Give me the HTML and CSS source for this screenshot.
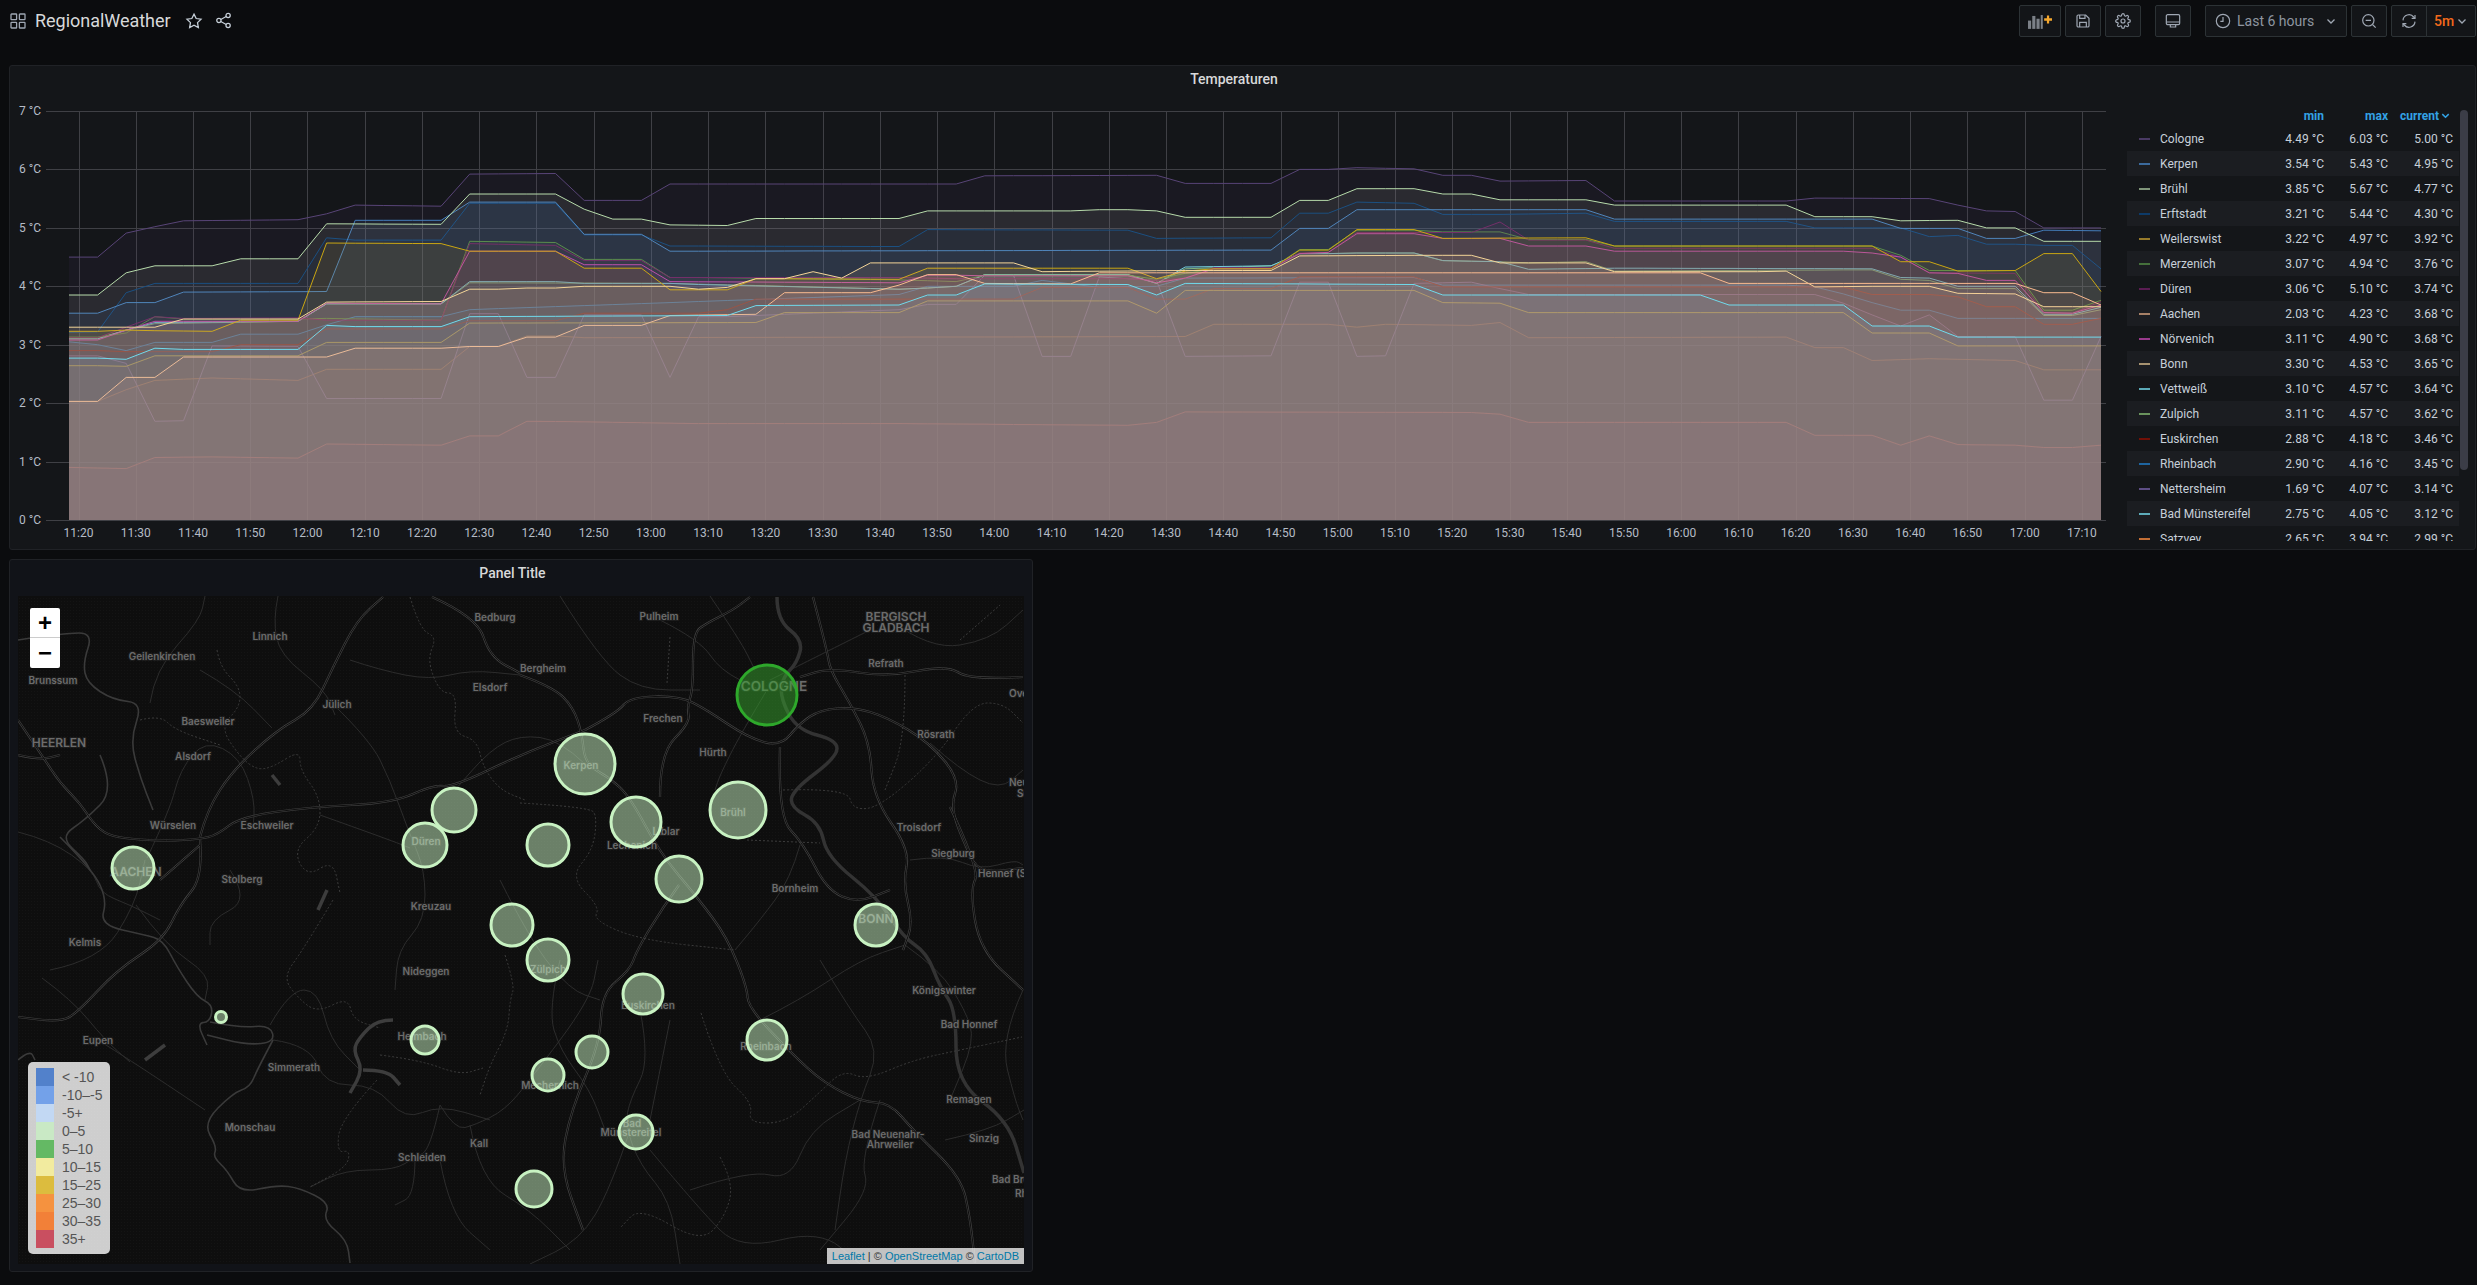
FILE: index.html
```html
<!DOCTYPE html>
<html lang="en">
<head>
<meta charset="utf-8">
<title>RegionalWeather</title>
<link rel="stylesheet" href="styles.css">
</head>
<body>
<header class="nav">
  <div class="nav-left">
    <svg class="ico ico-apps" viewBox="0 0 16 16"><rect x="1" y="1" width="5.6" height="5.6" rx=".6"/><rect x="9.4" y="1" width="5.6" height="5.6" rx=".6"/><rect x="1" y="9.4" width="5.6" height="5.6" rx=".6"/><rect x="9.4" y="9.4" width="5.6" height="5.6" rx=".6"/></svg>
    <h1 class="dash-title">RegionalWeather</h1>
    <svg class="ico ico-star" viewBox="0 0 24 24"><polygon points="12,2.8 14.9,8.7 21.4,9.6 16.7,14.2 17.8,20.7 12,17.6 6.2,20.7 7.3,14.2 2.6,9.6 9.1,8.7"/></svg>
    <svg class="ico ico-share" viewBox="0 0 24 24"><circle cx="18.5" cy="5" r="3"/><circle cx="5.5" cy="12" r="3"/><circle cx="18.5" cy="19" r="3"/><path d="M8.2 10.6l7.6-4.2M8.2 13.4l7.6 4.2"/></svg>
  </div>
  <div class="nav-right">
    <button class="btn btn-add"><svg class="ico-add" viewBox="0 0 26 16"><rect x="0" y="7" width="3.4" height="9"/><rect x="4.6" y="2" width="3.4" height="14"/><rect x="9.2" y="5" width="3.4" height="11"/><rect x="13.8" y="1" width="2.2" height="15"/><path class="plus" d="M17.5 4.5h3v-3h2.4v3H26v2.6h-3.1v3h-2.4v-3h-3z"/></svg></button>
    <button class="btn"><svg class="ico ico-btn" viewBox="0 0 24 24"><path d="M5 3h11l5 5v11a2 2 0 0 1-2 2H5a2 2 0 0 1-2-2V5a2 2 0 0 1 2-2z"/><path d="M7 21v-7h10v7M7 3v5h8V3"/></svg></button>
    <button class="btn"><svg class="ico ico-btn" viewBox="0 0 24 24"><circle cx="12" cy="12" r="3"/><path d="M19.4 15a1.65 1.65 0 0 0 .33 1.82l.06.06a2 2 0 0 1 0 2.83 2 2 0 0 1-2.83 0l-.06-.06a1.65 1.65 0 0 0-1.82-.33 1.65 1.65 0 0 0-1 1.51V21a2 2 0 0 1-2 2 2 2 0 0 1-2-2v-.09A1.65 1.65 0 0 0 9 19.4a1.65 1.65 0 0 0-1.82.33l-.06.06a2 2 0 0 1-2.83 0 2 2 0 0 1 0-2.83l.06-.06a1.65 1.65 0 0 0 .33-1.82 1.65 1.65 0 0 0-1.51-1H3a2 2 0 0 1-2-2 2 2 0 0 1 2-2h.09A1.65 1.65 0 0 0 4.6 9a1.65 1.65 0 0 0-.33-1.82l-.06-.06a2 2 0 0 1 0-2.83 2 2 0 0 1 2.83 0l.06.06a1.65 1.65 0 0 0 1.82.33H9a1.65 1.65 0 0 0 1-1.51V3a2 2 0 0 1 2-2 2 2 0 0 1 2 2v.09a1.65 1.65 0 0 0 1 1.51 1.65 1.65 0 0 0 1.82-.33l.06-.06a2 2 0 0 1 2.83 0 2 2 0 0 1 0 2.83l-.06.06a1.65 1.65 0 0 0-.33 1.82V9a1.65 1.65 0 0 0 1.51 1H21a2 2 0 0 1 2 2 2 2 0 0 1-2 2h-.09a1.65 1.65 0 0 0-1.51 1z"/></svg></button>
    <button class="btn btn-gap"><svg class="ico ico-btn" viewBox="0 0 24 24"><rect x="2" y="2.5" width="20" height="15" rx="2"/><path d="M2 13.5h20M8 17.5v3.5h8v-3.5"/></svg></button>
    <button class="btn btn-gap btn-time"><svg class="ico ico-btn" viewBox="0 0 24 24"><circle cx="12" cy="12" r="10"/><path d="M12 6v6.5H8"/></svg><span>Last 6 hours</span><svg class="ico ico-chev" viewBox="0 0 12 12"><path d="M2.5 4.5L6 8l3.5-3.5"/></svg></button>
    <button class="btn"><svg class="ico ico-btn" viewBox="0 0 24 24"><circle cx="11" cy="11" r="8.5"/><path d="M7 11h8M17.2 17.2L22 22"/></svg></button>
    <div class="btn-group">
      <button class="btn btn-sync"><svg class="ico ico-btn" viewBox="0 0 24 24"><path d="M3 11a9 9 0 0 1 16-5l2 2M21 13a9 9 0 0 1-16 5l-2-2"/><path d="M21 3v5h-5M3 21v-5h5"/></svg></button>
      <button class="btn btn-rate"><span>5m</span><svg class="ico ico-chev" viewBox="0 0 12 12"><path d="M2.5 4.5L6 8l3.5-3.5"/></svg></button>
    </div>
  </div>
</header>

<main class="dashboard">
  <section class="panel panel-graph">
    <h2 class="panel-title">Temperaturen</h2>
    <div class="graph-body">
      <svg id="chart" class="chart" viewBox="10 102 2110 447">
        <g id="grid"></g>
        <g id="series"></g>
        <g class="ylabels">
          <text x="41" y="115">7 °C</text><text x="41" y="173.4">6 °C</text><text x="41" y="231.8">5 °C</text><text x="41" y="290.3">4 °C</text><text x="41" y="348.7">3 °C</text><text x="41" y="407.1">2 °C</text><text x="41" y="465.6">1 °C</text><text x="41" y="524">0 °C</text>
        </g>
        <g class="xlabels">
          <text x="78.5" y="537">11:20</text><text x="135.7" y="537">11:30</text><text x="193" y="537">11:40</text><text x="250.2" y="537">11:50</text><text x="307.5" y="537">12:00</text><text x="364.7" y="537">12:10</text><text x="421.9" y="537">12:20</text><text x="479.2" y="537">12:30</text><text x="536.4" y="537">12:40</text><text x="593.7" y="537">12:50</text><text x="650.9" y="537">13:00</text><text x="708.1" y="537">13:10</text><text x="765.4" y="537">13:20</text><text x="822.6" y="537">13:30</text><text x="879.9" y="537">13:40</text><text x="937.1" y="537">13:50</text><text x="994.3" y="537">14:00</text><text x="1051.6" y="537">14:10</text><text x="1108.8" y="537">14:20</text><text x="1166.1" y="537">14:30</text><text x="1223.3" y="537">14:40</text><text x="1280.5" y="537">14:50</text><text x="1337.8" y="537">15:00</text><text x="1395" y="537">15:10</text><text x="1452.3" y="537">15:20</text><text x="1509.5" y="537">15:30</text><text x="1566.7" y="537">15:40</text><text x="1624" y="537">15:50</text><text x="1681.2" y="537">16:00</text><text x="1738.5" y="537">16:10</text><text x="1795.7" y="537">16:20</text><text x="1852.9" y="537">16:30</text><text x="1910.2" y="537">16:40</text><text x="1967.4" y="537">16:50</text><text x="2024.7" y="537">17:00</text><text x="2081.9" y="537">17:10</text>
        </g>
      </svg>
      <div class="legend">
        <div class="legend-head"><span></span><span></span><span>min</span><span>max</span><span class="sorted">current<svg class="ico ico-sort" viewBox="0 0 12 12"><path d="M2.5 4.5L6 8l3.5-3.5"/></svg></span></div>
        <div class="legend-row"><i class="sw c-cologne"></i><span>Cologne</span><span>4.49 °C</span><span>6.03 °C</span><span>5.00 °C</span></div>
        <div class="legend-row"><i class="sw c-kerpen"></i><span>Kerpen</span><span>3.54 °C</span><span>5.43 °C</span><span>4.95 °C</span></div>
        <div class="legend-row"><i class="sw c-bruehl"></i><span>Brühl</span><span>3.85 °C</span><span>5.67 °C</span><span>4.77 °C</span></div>
        <div class="legend-row"><i class="sw c-erft"></i><span>Erftstadt</span><span>3.21 °C</span><span>5.44 °C</span><span>4.30 °C</span></div>
        <div class="legend-row"><i class="sw c-weil"></i><span>Weilerswist</span><span>3.22 °C</span><span>4.97 °C</span><span>3.92 °C</span></div>
        <div class="legend-row"><i class="sw c-merz"></i><span>Merzenich</span><span>3.07 °C</span><span>4.94 °C</span><span>3.76 °C</span></div>
        <div class="legend-row"><i class="sw c-dueren"></i><span>Düren</span><span>3.06 °C</span><span>5.10 °C</span><span>3.74 °C</span></div>
        <div class="legend-row"><i class="sw c-aachen"></i><span>Aachen</span><span>2.03 °C</span><span>4.23 °C</span><span>3.68 °C</span></div>
        <div class="legend-row"><i class="sw c-noerv"></i><span>Nörvenich</span><span>3.11 °C</span><span>4.90 °C</span><span>3.68 °C</span></div>
        <div class="legend-row"><i class="sw c-bonn"></i><span>Bonn</span><span>3.30 °C</span><span>4.53 °C</span><span>3.65 °C</span></div>
        <div class="legend-row"><i class="sw c-vett"></i><span>Vettweiß</span><span>3.10 °C</span><span>4.57 °C</span><span>3.64 °C</span></div>
        <div class="legend-row"><i class="sw c-zulp"></i><span>Zulpich</span><span>3.11 °C</span><span>4.57 °C</span><span>3.62 °C</span></div>
        <div class="legend-row"><i class="sw c-eusk"></i><span>Euskirchen</span><span>2.88 °C</span><span>4.18 °C</span><span>3.46 °C</span></div>
        <div class="legend-row"><i class="sw c-rhein"></i><span>Rheinbach</span><span>2.90 °C</span><span>4.16 °C</span><span>3.45 °C</span></div>
        <div class="legend-row"><i class="sw c-nett"></i><span>Nettersheim</span><span>1.69 °C</span><span>4.07 °C</span><span>3.14 °C</span></div>
        <div class="legend-row"><i class="sw c-badm"></i><span>Bad Münstereifel</span><span>2.75 °C</span><span>4.05 °C</span><span>3.12 °C</span></div>
        <div class="legend-row"><i class="sw c-satz"></i><span>Satzvey</span><span>2.65 °C</span><span>3.94 °C</span><span>2.99 °C</span></div>
        <div class="scrollbar"></div>
      </div>
    </div>
  </section>

  <section class="panel panel-map">
    <h2 class="panel-title">Panel Title</h2>
    <div class="map">
      <svg class="map-svg" viewBox="18 596 1006 668">
        <defs>
          <pattern id="dither" width="3" height="3" patternUnits="userSpaceOnUse"><rect x="1" y="1" width="1" height="1" fill="#141414"/></pattern>
          <g id="mw">
            <polyline points="18,720 43,757 60,783 80,803 93,823 107,835 130,839 167,841 200,839 217,835 240,817 310,807 393,803 433,785 453,787 520,755 585,730"/>
            <polyline points="520,675 553,687 573,707 582,733 585,764 610,778 630,797 660,853 697,897 727,937 747,987 748,1007 791,1053 824,1083 862,1102 890,1103 913,1130 961,1177 970,1217 975,1263"/>
            <polyline points="585,730 617,713 630,697 680,696 707,710 747,737 780,747 800,723 820,710 853,707 887,717 930,743 960,780 950,807 967,850 980,873 1023,868"/>
            <polyline points="780,747 778,817 803,843 827,890 857,903 890,890"/>
            <polyline points="660,797 660,753 690,723 687,707 693,690 693,633 707,623 733,610 750,597"/>
            <polyline points="813,597 827,650 830,670 850,703 870,743 873,797 910,850 903,883 913,923 903,950"/>
            <polyline points="1023,677 970,680 947,665 887,677 830,668 800,677"/>
            <polyline points="950,807 980,870 970,890 980,950 1023,990"/>
            <polyline points="679,885 663,907 637,950 630,970 602,993 600,1043 571,1110 560,1167 583,1230"/>
            <polyline points="200,839 203,877 180,905 163,940 117,970 77,1013 60,1022 18,1017"/>
            <polyline points="200,837 207,810 233,770 277,730 313,710 333,667 357,620 383,597"/>
            <polyline points="432,597 477,617 490,657 520,673"/>
            <polyline points="18,755 40,760 60,755"/>
            <polyline points="160,880 175,867 200,845"/>
          </g>
        </defs>
        <rect x="18" y="596" width="1006" height="668" class="land"/>
        <rect x="18" y="596" width="1006" height="668" fill="url(#dither)"/>
        <g class="thin">
          <polyline points="18,832 50,840 93,870 100,893 130,905 160,920"/>
          <polyline points="147,858 170,810 180,770 205,740 240,757 255,800 253,830"/>
          <polyline points="150,703 155,670 200,620 205,596"/>
          <polyline points="278,596 273,620 280,655 325,690 335,715"/>
          <polyline points="200,670 235,690 272,728"/>
          <polyline points="333,704 370,740 390,780 408,830 425,870 425,920 398,950 395,990"/>
          <polyline points="350,660 380,670 430,680 470,670 520,675"/>
          <polyline points="320,815 390,840 410,848"/>
          <polyline points="230,870 250,900 210,920 210,945"/>
          <polyline points="50,970 100,960 135,905 145,860"/>
          <polyline points="42,978 72,1000 105,1040 130,1062"/>
          <polyline points="136,905 165,945 210,975 205,1000"/>
          <polyline points="270,1025 290,990 318,990 330,1040 360,1070"/>
          <polyline points="98,1040 130,1060 205,1110"/>
          <polyline points="273,1040 310,1045 325,1085 375,1085 405,1120 440,1105 490,1120"/>
          <polyline points="440,1105 430,1150 415,1157 395,1170 345,1170 310,1187"/>
          <polyline points="440,1105 455,1130 475,1125 505,1110 530,1080 590,1000 598,960"/>
          <polyline points="470,1125 480,1180 530,1210 570,1250"/>
          <polyline points="415,1157 415,1195 395,1205"/>
          <polyline points="440,1160 450,1215 490,1250"/>
          <polyline points="640,1010 650,1060 630,1100 625,1125 640,1165 670,1200 680,1264"/>
          <polyline points="630,1130 610,1190 580,1240 530,1264"/>
          <polyline points="500,880 530,940 570,990 600,1000"/>
          <polyline points="560,960 548,1010 560,1050 590,1090 605,1130"/>
          <polyline points="585,764 560,740 520,735 490,750 455,790"/>
          <polyline points="660,620 700,640 720,670 760,690"/>
          <polyline points="767,690 740,735 720,775 715,790"/>
          <polyline points="560,596 600,660 640,690 700,690"/>
          <polyline points="710,596 740,640 755,670"/>
          <polyline points="890,620 930,650 990,640 1023,610"/>
          <polyline points="870,630 790,670 770,680"/>
          <polyline points="910,860 945,855 980,870 1015,860 1023,865"/>
          <polyline points="930,743 960,770 1000,790 1023,770"/>
          <polyline points="800,845 790,880 760,920 735,950"/>
          <polyline points="820,960 850,1010 880,1050 860,1100 845,1160 835,1230"/>
          <polyline points="760,1020 800,1000 860,960 905,945"/>
          <polyline points="905,945 940,970 965,1010 975,1040 950,1100"/>
          <polyline points="1023,990 1000,1040 1015,1100 1023,1120"/>
          <polyline points="670,1020 662,1060 650,1120"/>
          <polyline points="690,1190 750,1170 790,1180 810,1130 860,1100"/>
          <polyline points="650,1150 700,1210 740,1250 820,1230 860,1264"/>
          <polyline points="880,1100 860,1160 870,1190 820,1250"/>
          <polyline points="945,1140 990,1130 1024,1110"/>
        </g>
        <g class="border-line">
          <polyline points="18,640 65,633 93,633 83,663 87,683 113,700 143,703 130,740 140,777 153,810"/>
          <polyline points="60,837 93,870 107,900 100,925 145,935 163,940 177,967 197,997 213,1005 210,1022 197,1023 207,1045"/>
          <polyline points="210,1022 240,1028 270,1025 275,1042 247,1045 207,1035"/>
          <polyline points="273,1040 257,1070 250,1087 233,1093 203,1123 217,1147 213,1157 227,1170 240,1193 277,1185 300,1188 330,1203 323,1220 347,1240 350,1263"/>
          <polyline points="100,755 115,790 85,820 60,837 85,860 90,870"/>
          <polyline points="18,1060 30,1050 35,1060"/>
        </g>
        <g class="river">
          <polyline points="777,597 777,620 803,640 797,663 783,677 780,697 797,730 837,740 837,757 793,790 790,807 820,823 827,857 877,897 903,937 927,953 940,987 956,1010 956,1083 1008,1120 1024,1173"/>
        </g>
        <g class="lake">
          <polyline points="393,1020 377,1020 360,1037 353,1050 363,1070 350,1093"/>
          <polyline points="363,1070 387,1070 400,1085"/>
          <polyline points="327,890 318,910"/>
          <polyline points="145,1060 165,1045"/>
          <polyline points="272,775 280,785"/>
        </g>
        <g class="mw-a"><use href="#mw"/></g>
        <g class="mw-b"><use href="#mw"/></g>
        <g class="dots">
          <polyline points="410,597 420,630 437,637 427,660 440,693 457,693 453,733 477,740 483,767 500,790 525,800"/>
          <polyline points="217,650 220,667 240,687 240,707 220,727 240,757 257,770 273,767 300,750 300,770 320,797 320,827 293,850 307,877 333,860 340,893"/>
          <polyline points="140,720 160,715 175,730 220,745"/>
          <polyline points="333,900 303,950 283,977 297,997 317,1013 348,997 353,1020 380,1028"/>
          <polyline points="377,1080 340,1120 337,1153 350,1150 347,1167 310,1187"/>
          <polyline points="380,1055 420,1060 460,1075 483,1068"/>
          <polyline points="701,1013 720,1073 753,1103 748,1123 786,1123 819,1093 843,1070 866,1080 913,1060 960,1050 1022,1037"/>
          <polyline points="720,1157 734,1183 725,1217 701,1243 640,1207 621,1227"/>
          <polyline points="783,790 847,788 853,810 880,807 937,757 973,703 1003,703 1023,723"/>
          <polyline points="670,637 667,683"/>
          <polyline points="520,803 590,807 597,817 593,850 570,877 600,907 593,920 640,940 735,950"/>
          <polyline points="747,840 820,843"/>
          <polyline points="505,955 515,985 510,1000 508,1030 490,1065 480,1095"/>
          <polyline points="960,640 1000,605"/>
          <polyline points="905,675 905,740 885,790"/>
        </g>
        <g class="map-labels">
          <text x="270" y="640">Linnich</text><text x="162" y="660">Geilenkirchen</text><text x="53" y="684">Brunssum</text><text class="big" x="59" y="747">HEERLEN</text><text x="208" y="725">Baesweiler</text><text x="193" y="760">Alsdorf</text><text x="337" y="708">Jülich</text><text x="495" y="621">Bedburg</text><text x="490" y="691">Elsdorf</text><text x="173" y="829">Würselen</text><text x="267" y="829">Eschweiler</text><text class="big" x="136" y="876">AACHEN</text><text x="242" y="883">Stolberg</text><text x="426" y="845">Düren</text><text x="431" y="910">Kreuzau</text><text x="85" y="946">Kelmis</text>
          <text x="659" y="620">Pulheim</text><text class="big" x="896" y="621">BERGISCH</text><text class="big" x="896" y="632">GLADBACH</text><text x="543" y="672">Bergheim</text><text x="886" y="667">Refrath</text><text class="huge" x="774" y="691">COLOGNE</text><text x="1009" y="697" class="start">Overath</text><text x="663" y="722">Frechen</text><text x="936" y="738">Rösrath</text><text x="713" y="756">Hürth</text><text x="581" y="769">Kerpen</text><text x="733" y="816">Brühl</text><text x="919" y="831">Troisdorf</text><text x="1009" y="786" class="start">Neunkirchen-</text><text x="1017" y="797" class="start">Seelscheid</text><text x="632" y="849">Lechenich</text><text x="666" y="835">Liblar</text><text x="953" y="857">Siegburg</text><text x="978" y="877" class="start">Hennef (Sieg)</text><text x="795" y="892">Bornheim</text><text class="big" x="876" y="923">BONN</text>
          <text x="426" y="975">Nideggen</text><text x="548" y="973">Zülpich</text><text x="944" y="994">Königswinter</text><text x="648" y="1009">Euskirchen</text><text x="969" y="1028">Bad Honnef</text><text x="422" y="1040">Heimbach</text><text x="766" y="1050">Rheinbach</text><text x="550" y="1089">Mechernich</text><text x="479" y="1147">Kall</text><text x="294" y="1071">Simmerath</text><text x="250" y="1131">Monschau</text><text x="98" y="1044">Eupen</text><text x="422" y="1161">Schleiden</text><text x="969" y="1103">Remagen</text><text x="888" y="1138">Bad Neuenahr-</text><text x="890" y="1148">Ahrweiler</text><text x="984" y="1142">Sinzig</text><text x="632" y="1127">Bad</text><text x="631" y="1136">Münstereifel</text><text x="992" y="1183" class="start">Bad Breisig</text><text x="1015" y="1197" class="start">Rheineck</text>
        </g>
        <g class="markers">
          <circle class="mk-hot" cx="767" cy="695" r="30"/>
          <circle cx="585" cy="764" r="30"/><circle cx="738" cy="810" r="28"/><circle cx="636" cy="822" r="25"/><circle cx="679" cy="879" r="23"/><circle cx="548" cy="845" r="21"/><circle cx="454" cy="810" r="22"/><circle cx="425" cy="845" r="22"/><circle cx="133" cy="868" r="21"/><circle cx="876" cy="925" r="21"/><circle cx="512" cy="925" r="21"/><circle cx="548" cy="960" r="21"/><circle cx="643" cy="994" r="20"/><circle cx="767" cy="1040" r="20"/><circle cx="425" cy="1040" r="14"/><circle cx="592" cy="1052" r="16"/><circle cx="548" cy="1075" r="16"/><circle cx="636" cy="1132" r="17"/><circle cx="534" cy="1189" r="18"/><circle cx="221" cy="1017" r="5.5"/>
        </g>
      </svg>
      <div class="zoom-ctl"><a>+</a><a>−</a></div>
      <div class="map-legend">
        <div class="ml-row"><i class="ml-sw s1"></i>&lt; -10</div>
        <div class="ml-row"><i class="ml-sw s2"></i>-10–-5</div>
        <div class="ml-row"><i class="ml-sw s3"></i>-5+</div>
        <div class="ml-row"><i class="ml-sw s4"></i>0–5</div>
        <div class="ml-row"><i class="ml-sw s5"></i>5–10</div>
        <div class="ml-row"><i class="ml-sw s6"></i>10–15</div>
        <div class="ml-row"><i class="ml-sw s7"></i>15–25</div>
        <div class="ml-row"><i class="ml-sw s8"></i>25–30</div>
        <div class="ml-row"><i class="ml-sw s9"></i>30–35</div>
        <div class="ml-row"><i class="ml-sw s10"></i>35+</div>
      </div>
      <div class="attribution"><a>Leaflet</a> | © <a>OpenStreetMap</a> © <a>CartoDB</a></div>
    </div>
  </section>
</main>
<script src="chart.js"></script>
</body>
</html>
```
FILE: styles.css
```css
* { box-sizing: border-box; }
html, body { margin: 0; height: 100%; }
body {
  background: #0b0c0e;
  color: #c7d0d9;
  font-family: Roboto, "Liberation Sans", sans-serif;
  font-size: 12px;
  overflow: hidden;
}
h1, h2 { margin: 0; font-weight: 500; }

.nav { display: flex; justify-content: space-between; height: 65px; padding: 5px 1px 0 10px; }
.nav-left { display: flex; align-items: center; height: 31px; }
.nav-right { display: flex; align-items: flex-start; gap: 4px; }
.ico { fill: none; stroke: #9fa7b3; stroke-width: 1.6; flex: none; }
.ico-apps { width: 16px; height: 16px; stroke-width: 1.3; margin-top: 1px; }
.dash-title { font-size: 18px; font-weight: 400; color: #d8d9da; margin-left: 9px; letter-spacing: -.03px; }
.ico-star { width: 18px; height: 18px; margin-left: 14px; stroke: #c7d0d9; stroke-width: 1.7; }
.ico-share { width: 17px; height: 17px; margin-left: 12px; stroke: #c7d0d9; stroke-width: 1.8; }

.btn {
  display: flex; align-items: center; justify-content: center;
  width: 36px; height: 32px; padding: 0;
  background: #131518; border: 1px solid #2c3235; border-radius: 2px;
  color: #9fa7b3; font: 14px Roboto, sans-serif;
}
.btn-gap { margin-left: 10px; }
.btn-add { width: 42px; }
.ico-add { width: 24px; height: 15px; fill: #7b8087; }
.ico-add .plus { fill: #f5a82e; }
.ico-btn { width: 16px; height: 16px; stroke: #9fa7b3; stroke-width: 1.8; }
.btn-time { width: 142px; justify-content: flex-start; padding-left: 9px; }
.btn-time span { margin-left: 6px; font-size: 14px; color: #8e95a0; }
.ico-chev { width: 12px; height: 12px; stroke-width: 1.3; }
.btn-time .ico-chev { margin-left: 11px; }
.btn-group { display: flex; }
.btn-sync { width: 36px; border-radius: 2px 0 0 2px; }
.btn-rate { width: 50px; border-left: 1px solid #2c3235; margin-left: -1px; border-radius: 0 2px 2px 0; gap: 2px; }
.btn-rate span { color: #f2691c; font-weight: 500; font-size: 14px; }

.dashboard { display: flex; flex-direction: column; gap: 9px; padding: 0 1px 0 9px; }
.panel { background: #141619; border: 1px solid #202226; border-radius: 3px; }
.panel-title { height: 36px; line-height: 26px; padding-right: 17px; text-align: center; font-size: 14px; font-weight: 500; color: #d8d9da; }
.panel-graph { height: 485px; }
.graph-body { display: flex; }
.chart { display: block; width: 2110px; height: 447px; flex: none; }
#grid line { stroke: #3f4045; stroke-width: 1; shape-rendering: crispEdges; }
#series polygon { stroke: none; fill-opacity: .1; }
#series polyline { fill: none; stroke-width: 1; stroke-linejoin: round; }
.ylabels text { text-anchor: end; font-size: 12px; fill: #b5bcc6; }
.xlabels text { text-anchor: middle; font-size: 12px; fill: #b5bcc6; }

.legend { position: relative; flex: 1; height: 439px; overflow: hidden; padding: 3px 0 0 7px; }
.legend-head, .legend-row {
  display: grid; grid-template-columns: 21px 100px 64px 64px 65px;
  width: 332px; padding: 0 6px 0 12px; align-items: center;
}
.legend-head { height: 21px; color: #33a2e5; font-weight: 700; text-align: right; }
.legend-head .sorted { display: flex; justify-content: flex-end; align-items: center; margin-right: -1px; white-space: nowrap; }
.ico-sort { width: 11px; height: 11px; stroke: #33a2e5; margin-left: 1px; margin-right: 3px; }
.legend-row { height: 25px; color: #c7d0d9; white-space: nowrap; }
.legend-row span:nth-child(n+3) { text-align: right; }
.legend-row:nth-child(odd) { background: #1b1d21; }
.sw { display: block; width: 11px; height: 2px; opacity: .8; }
.scrollbar { position: absolute; left: 340px; top: 8px; width: 8px; height: 360px; border-radius: 4px; background: #3b3d47; }
.c-cologne { background: #584477; } .c-kerpen { background: #447ebc; } .c-bruehl { background: #9bb592; }
.c-erft { background: #0a437c; } .c-weil { background: #b8952f; } .c-merz { background: #508642; }
.c-dueren { background: #6d1f62; } .c-aachen { background: #c99a78; } .c-noerv { background: #ba43a9; }
.c-bonn { background: #c9b084; } .c-vett { background: #6ed0e0; } .c-zulp { background: #7eb26d; }
.c-eusk { background: #890f02; } .c-rhein { background: #1f78c1; } .c-nett { background: #705da0; }
.c-badm { background: #6ed0e0; } .c-satz { background: #ef843c; }

.panel-map { width: 1024px; height: 713px; padding: 0 8px; background: #111318; }
.map { position: relative; width: 1006px; height: 668px; overflow: hidden; }
.map-svg { display: block; width: 1006px; height: 668px; }
.land { fill: #0e0e0e; }
.thin { fill: none; stroke: #2c2c2c; stroke-width: 1; stroke-linejoin: round; }
.border-line { fill: none; stroke: #3a3a3a; stroke-width: 1.6; stroke-linejoin: round; }
.river { fill: none; stroke: #333; stroke-width: 3.5; stroke-linejoin: round; }
.lake { fill: none; stroke: #3d3d3d; stroke-width: 3.5; stroke-linejoin: round; }
.mw-a { fill: none; stroke: #424242; stroke-width: 2.2; stroke-linejoin: round; }
.mw-b { fill: none; stroke: #0e0e0e; stroke-width: 1; stroke-linejoin: round; }
.dots { fill: none; stroke: #3c3c3c; stroke-width: 1; stroke-dasharray: 2 2; }
.map-labels text {
  font-family: Inter, "Open Sans", sans-serif; font-size: 10px; font-weight: 600;
  fill: #6c6c6c; text-anchor: middle; paint-order: stroke; stroke: #1c1c1c; stroke-width: 2px;
}
.map-labels .big { font-size: 12px; }
.map-labels .huge { font-size: 13.5px; }
.map-labels .start { text-anchor: start; }
.markers circle { fill: #c8f2c2; fill-opacity: .5; stroke: #c8f2c2; stroke-width: 3; }
.markers .mk-hot { fill: #37a52d; stroke: #2ea82b; }

.zoom-ctl { position: absolute; left: 12px; top: 12px; width: 30px; background: #fff; border-radius: 2px; }
.zoom-ctl a { display: block; height: 30px; line-height: 30px; text-align: center; color: #000; font: 700 24px/29px "Liberation Sans", sans-serif; }
.zoom-ctl a:first-child { border-bottom: 1px solid #ccc; }
.map-legend {
  position: absolute; left: 10px; top: 466px; width: 82px; height: 192px;
  padding: 6px 8px; background: rgba(255,255,255,.8); border-radius: 5px;
  color: #555; font: 14px/18px "Liberation Sans", sans-serif;
}
.ml-row { display: flex; height: 18px; }
.ml-sw { width: 18px; height: 18px; margin-right: 8px; flex: none; }
.s1 { background: #5281cb; } .s2 { background: #73a1e9; } .s3 { background: #c2d8f3; } .s4 { background: #c9e9c5; }
.s5 { background: #64b964; } .s6 { background: #f2eb9f; } .s7 { background: #dcbc3e; } .s8 { background: #f5923f; }
.s9 { background: #f28038; } .s10 { background: #c94f60; }
.attribution {
  position: absolute; right: 0; bottom: 0; padding: 0 5px; height: 16px;
  background: rgba(255,255,255,.75); color: #333;
  font: 11px/16px "Liberation Sans", sans-serif; white-space: nowrap;
}
.attribution a { color: #0078a8; }
```
FILE: chart.js
```js
(function () {
  var NS = 'http://www.w3.org/2000/svg';
  var X0 = 69, DX = 28.62, Y0 = 520, DY = 58.43;
  var grid = document.getElementById('grid');
  var group = document.getElementById('series');
  function el(name, attrs, parent) {
    var e = document.createElementNS(NS, name);
    for (var k in attrs) e.setAttribute(k, attrs[k]);
    parent.appendChild(e);
    return e;
  }
  /* fills sit slightly cooler than the stroke colour */
  function fillOf(hex) {
    var r = parseInt(hex.substr(1, 2), 16), g = parseInt(hex.substr(3, 2), 16), b = parseInt(hex.substr(5, 2), 16);
    return 'rgb(' + r + ',' + Math.round(g * 0.91) + ',' + Math.min(255, b + 3) + ')';
  }
  for (var v = 0; v <= 7; v++) {
    var y = Math.round(Y0 - v * DY);
    el('line', { x1: 46, x2: 2106, y1: y, y2: y }, grid);
  }
  for (var k = 0; k < 36; k++) {
    var x = Math.round(78.5 + 57.24 * k);
    el('line', { x1: x, x2: x, y1: 111, y2: 520 }, grid);
  }
  /* flat [index, value, ...] key points; values between keys are interpolated */
  var S = [
    ['#E24D42', [0,.9,2,.88,3,1.07,5,1.08,8,1.06,9,1.3,13,1.28,14,1.44,15,1.44,16,1.69,18,1.68,22,1.65,29,1.65,37,1.62,38,1.67,39,1.85,49,1.84,50,1.81,51,1.67,60,1.67,61,1.45,63,1.45,64,1.28,65,1.44,66,1.29,68,1.28,69,1.24,70,1.24,71,1.28]],
    ['#C15C17', [0,2.03,1,2.03,2,2.23,3,2.39,5,2.43,8,2.39,9,2.58,13,2.58,14,2.97,15,2.97,16,3.15,17,3.15,18,3.12,39,3.14,40,3.35,44,3.35,45,3.3,46,3.35,49,3.33,50,3.38,51,3.12,60,3.13,61,2.95,62,2.95,63,2.73,65,2.76,68,2.73,69,2.57,71,2.57]],
    ['#584477', [0,4.5,1,4.5,2,4.91,3,5.02,4,5.12,8,5.14,9,5.24,10,5.39,13,5.37,14,5.92,17,5.93,18,5.47,20,5.47,21,5.75,31,5.75,32,5.89,38,5.9,39,5.76,42,5.76,43,6,44,6,45,6.03,47,6.01,48,5.9,49,5.9,50,5.8,53,5.81,54,5.46,60,5.46,61,5.51,65,5.5,66,5.39,67,5.29,68,5.28,69,5,71,5]],
    ['#0A437C', [0,3.21,1,3.22,2,3.89,3,4.05,8,4.05,9,4.83,10,4.79,13,4.79,14,5.42,17,5.42,18,4.88,20,4.88,21,4.69,29,4.68,30,4.97,37,4.96,38,4.82,42,4.83,43,5.25,44,5.25,45,5.44,47,5.42,48,5.23,50,5.23,53,5.25,54,5.11,60,5.11,61,5,64,5,65,4.85,66,4.87,67,4.72,68,4.72,69,4.7,70,4.7,71,4.3]],
    ['#447EBC', [0,3.54,1,3.54,2,3.72,3,3.72,4,3.9,9,3.91,10,5.13,13,5.13,14,5.44,17,5.44,18,4.89,20,4.89,21,4.6,42,4.62,43,4.99,44,4.99,45,5.31,53,5.31,54,5.15,63,5.15,64,4.99,66,4.99,67,4.82,68,4.82,69,4.96,71,4.95]],
    ['#1F78C1', [0,3.05,1,3.0,2,2.9,3,3.04,5,3.04,6,3.18,8,3.18,9,3.34,10,3.48,13,3.48,14,3.6,29,3.86,30,4,33,4,34,4.1,36,3.98,38,4,39,4.14,47,4.15,48,4.02,60,4.02,61,3.99,62,3.87,63,3.72,64,3.59,65,3.59,66,3.45,71,3.45]],
    ['#705DA0', [0,2.81,1,2.81,2,2.68,3,1.69,4,1.7,5,2.98,8,2.97,9,2.08,13,2.08,14,3.53,15,3.53,16,2.44,17,2.44,18,3.51,20,3.51,21,2.44,22,3.48,23,3.48,29,3.6,30,3.69,31,3.69,32,4.19,33,4.19,34,2.8,35,2.8,36,4.16,38,4.1,39,2.8,42,2.81,43,4.07,44,4.07,45,2.8,46,2.81,47,4.05,49,4.07,50,3.96,51,3.86,61,3.86,62,3.71,63,3.51,64,3.32,65,3.51,66,3.14,68,3.14,69,2.05,70,2.05,71,3.14]],
    ['#890F02', [0,2.9,1,2.9,2,2.88,5,2.88,6,3,8,3,9,3.27,13,3.27,14,3.41,17,3.41,18,3.54,22,3.54,23,3.6,24,3.78,33,3.78,34,3.98,37,3.98,38,3.78,39,3.78,40,3.96,42,3.96,43,4.16,47,4.16,48,3.99,61,3.99,62,3.99,63,3.86,65,3.86,66,3.82,67,3.65,68,3.65,69,3.35,70,3.35,71,3.45]],
    ['#C4A02E', [0,2.64,1,2.64,2,2.63,3,2.81,8,2.81,9,3.04,13,3.04,14,3.37,24,3.38,25,3.55,29,3.55,30,3.75,37,3.75,38,3.54,39,3.93,47,3.93,48,3.72,50,3.71,51,3.55,62,3.55,63,3.2,65,3.2,66,2.98,71,2.98]],
    ['#7EB26D', [0,3.11,1,3.11,2,3.25,3,3.36,8,3.4,9,3.7,13,3.7,14,4.06,21,4.05,29,3.95,30,3.97,31,4,32,4.2,37,4.2,38,4.05,39,4.3,42,4.35,43,4.56,44,4.56,45,4.57,47,4.57,48,4.44,50,4.42,51,4.4,53,4.42,54,4.26,62,4.28,63,4.28,64,4.12,65,4.1,66,3.96,68,3.96,69,3.5,70,3.5,71,3.6]],
    ['#6ED0E0', [0,3.1,1,3.1,2,3.25,3,3.38,8,3.4,9,3.7,13,3.7,14,4.08,17,4.08,18,4.05,21,4.05,22,4.03,29,3.95,30,3.97,31,4,32,4.2,37,4.2,38,4.05,39,4.33,42,4.35,43,4.56,44,4.56,45,4.57,47,4.57,48,4.44,50,4.42,51,4.29,54,4.31,63,4.3,64,4.15,65,4.14,66,4,68,4,69,3.52,70,3.52,71,3.64]],
    ['#508642', [0,3.13,1,3.13,2,3.2,3,3.48,4,3.44,8,3.44,9,3.45,13,3.42,14,4.77,17,4.75,18,4.46,20,4.46,21,4.15,22,4.15,29,4.11,31,4.08,32,4.19,37,4.19,38,4.12,39,4.22,40,4.3,42,4.3,43,4.63,44,4.63,45,4.96,47,4.96,48,4.93,50,4.93,51,4.8,53,4.8,54,4.69,63,4.69,64,4.53,65,4.27,68,4.27,69,3.59,70,3.59,71,3.76]],
    ['#6D1F62', [0,3.12,1,3.12,2,3.3,3,3.48,4,3.45,8,3.46,9,3.42,13,3.42,14,4.73,15,4.72,17,4.7,18,4.44,20,4.44,21,4.15,29,4.15,31,4.13,37,4.13,38,4.1,39,4.14,40,4.32,42,4.32,43,4.57,44,4.58,45,4.92,49,4.92,50,5.1,51,4.79,53,4.79,54,4.65,63,4.65,64,4.5,65,4.23,68,4.22,69,3.55,70,3.54,71,3.74]],
    ['#BA43A9', [0,3.08,1,3.08,2,3.25,3,3.4,8,3.4,9,3.71,13,3.7,14,4.6,17,4.6,18,4.37,20,4.37,21,4.08,29,4.06,30,4.19,31,4.19,32,4.18,37,4.18,38,4.06,39,4.14,40,4.3,42,4.3,43,4.56,44,4.58,45,4.9,47,4.9,48,4.82,50,4.82,51,4.69,53,4.69,54,4.6,62,4.6,63,4.57,64,4.5,65,4.23,66,4.22,67,4.1,68,4.1,69,3.55,70,3.54,71,3.68]],
    ['#CCA300', [0,3.23,1,3.23,2,3.25,3,3.24,5,3.23,6,3.42,8,3.42,9,4.74,13,4.73,14,4.6,17,4.6,18,4.31,20,4.31,21,3.94,23,3.94,24,4.13,29,4.12,30,4.31,37,4.31,38,4.13,39,4.26,40,4.3,42,4.3,43,4.62,44,4.62,45,4.97,47,4.97,48,4.82,53,4.83,54,4.69,63,4.69,64,4.42,65,4.42,66,4.26,68,4.27,69,4.56,70,4.56,71,3.91]],
    ['#B7DBAB', [0,3.85,1,3.85,2,4.23,3,4.35,5,4.35,6,4.47,8,4.47,9,5.07,13,5.06,14,5.58,17,5.58,18,5.32,19,5.15,20,5.15,21,5.05,23,5.04,24,5.16,29,5.16,30,5.29,35,5.29,36,5.31,37,5.31,38,5.29,39,5.18,42,5.18,43,5.47,44,5.47,45,5.67,47,5.67,48,5.58,49,5.58,50,5.48,53,5.48,54,5.39,60,5.39,61,5.19,63,5.19,64,5.12,66,5.13,67,5,68,5,69,4.77,71,4.77]],
    ['#F4D598', [0,3.3,3,3.3,4,3.44,8,3.44,9,3.73,13,3.74,14,3.95,15,3.95,16,3.97,17,3.97,18,4,21,4,22,3.95,23,3.98,24,4.13,25,4.13,26,4.25,27,4.14,28,4.4,33,4.4,34,4.25,39,4.27,42,4.27,43,4.52,47,4.53,49,4.53,50,4.4,53,4.4,54,4.25,59,4.25,60,4.26,61,3.99,63,4,65,4,66,3.88,68,3.87,69,3.65,71,3.65]],
    ['#F9BA8F', [0,2.03,1,2.03,2,2.44,3,2.44,4,2.79,9,2.79,10,2.94,13,2.94,14,2.97,15,2.97,16,3.13,17,3.13,18,3.33,20,3.33,21,3.5,24,3.52,25,3.89,28,3.89,29,4.02,30,4.2,31,4.2,32,4.05,35,4.04,36,4.23,57,4.23,58,4.05,67,4.05,68,4.05,69,3.89,70,3.89,71,3.68]],
    ['#70DBED', [0,2.77,1,2.77,2,2.75,3,2.94,4,2.92,8,2.92,9,3.33,10,3.31,13,3.31,14,3.48,23,3.5,24,3.67,29,3.68,30,3.85,31,3.85,32,4.04,37,4.03,38,3.85,39,4.05,47,4.03,48,3.85,57,3.85,58,3.68,62,3.68,63,3.32,65,3.32,66,3.13,71,3.13]]
  ];
  S.forEach(function (s) {
    var keys = s[1], pts = [], a = 0;
    for (var i = 0; i <= 71; i++) {
      while (a + 2 < keys.length - 2 && keys[a + 2] < i) a += 2;
      var i0 = keys[a], v0 = keys[a + 1], i1 = keys[a + 2], v1 = keys[a + 3];
      var val = i1 === i0 ? v0 : v0 + (v1 - v0) * (i - i0) / (i1 - i0);
      pts.push((X0 + DX * i).toFixed(1) + ',' + (Y0 - val * DY).toFixed(1));
    }
    var line = pts.join(' ');
    el('polygon', { points: X0 + ',' + Y0 + ' ' + line + ' ' + (X0 + DX * 71).toFixed(1) + ',' + Y0, fill: fillOf(s[0]) }, group);
    el('polyline', { points: line, stroke: s[0] }, group);
  });

  /* round the map's hand-traced roads and rivers */
  document.querySelectorAll('.map-svg polyline').forEach(function (p) {
    var c = p.getAttribute('points').trim().split(/\s+/).map(function (q) { return q.split(',').map(Number); });
    var d = 'M' + c[0][0] + ' ' + c[0][1];
    for (var i = 1; i < c.length - 1; i++) {
      var mx = (c[i][0] + c[i + 1][0]) / 2, my = (c[i][1] + c[i + 1][1]) / 2;
      d += 'Q' + c[i][0] + ' ' + c[i][1] + ' ' + mx + ' ' + my;
    }
    var last = c[c.length - 1];
    d += 'L' + last[0] + ' ' + last[1];
    var path = document.createElementNS(NS, 'path');
    path.setAttribute('d', d);
    p.parentNode.replaceChild(path, p);
  });
})();
```
